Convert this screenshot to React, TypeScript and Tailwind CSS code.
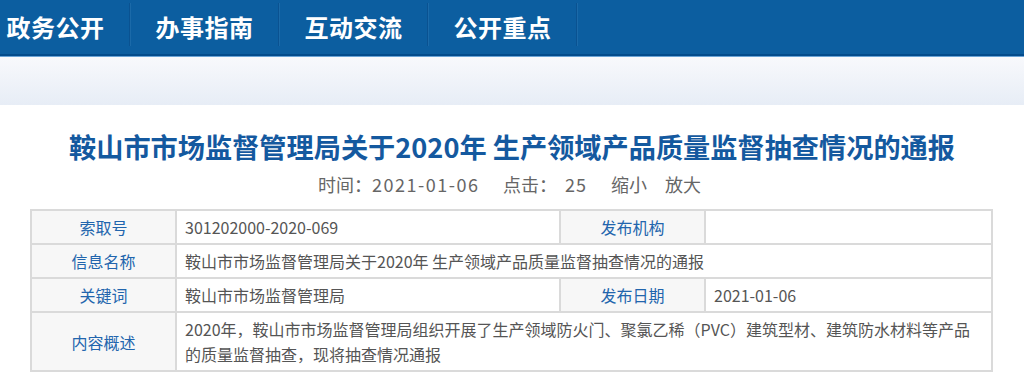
import React from 'react';

const navItems = ['政务公开', '办事指南', '互动交流', '公开重点'];

const labelCls =
  'bg-[#f7f7f7] text-[#2265ad] text-[16px] text-center border-2 border-[#dadada] font-normal';
const valueCls = 'text-[#555] text-[16px] text-left pl-[8px] border-2 border-[#dadada]';

const App: React.FC = () => {
  return (
    <div className="w-[1024px] h-[387px] overflow-hidden bg-white font-['Noto_Sans_CJK_SC','Noto_Sans',sans-serif]">
      {/* 顶部导航 */}
      <div className="h-[54px] bg-[#0c5ea0] flex items-stretch ml-[-18px]">
        {navItems.map((item) => (
          <div key={item} className="flex items-center">
            <div className="w-[147px] text-center text-white text-[24px] font-bold leading-[54px] tracking-[0.5px]">
              {item}
            </div>
            <div className="flex h-[43px] mt-[-6px]">
              <div className="w-[1px] bg-[#0a5291]" />
              <div className="w-[1px] bg-[#1b6aa9]" />
            </div>
          </div>
        ))}
      </div>
      <div className="h-[2px] bg-[#034c8c]" />
      <div className="h-[1px] bg-[#6aa3d6]" />
      <div className="h-[48px] bg-gradient-to-b from-[#f8f9fc] to-[#e7edf6]" />

      {/* 标题 */}
      <h1 className="pt-[23px] text-center text-[27.2px] leading-[36px] font-bold text-[#14599f]">
        鞍山市市场监督管理局关于2020年 生产领域产品质量监督抽查情况的通报
      </h1>
      <div className="mt-[8px] pl-[318px] flex whitespace-nowrap text-[18px] leading-[24px] text-[#666]">
        <span>时间：</span>
        <span className="w-[131px] tracking-[1.5px]">2021-01-06</span>
        <span className="w-[62px]">点击：</span>
        <span className="w-[46px] tracking-[1px]">25</span>
        <span className="w-[54px]">缩小</span>
        <span>放大</span>
      </div>

      {/* 信息表 */}
      <table className="mt-[13px] ml-[30px] w-[961px] border-collapse table-fixed">
        <colgroup>
          <col className="w-[145px]" />
          <col className="w-[384px]" />
          <col className="w-[145px]" />
          <col className="w-[287px]" />
        </colgroup>
        <tbody>
          <tr className="h-[34px]">
            <th className={labelCls}>索取号</th>
            <td className={`${valueCls} text-[14.5px]`}>301202000-2020-069</td>
            <th className={labelCls}>发布机构</th>
            <td className={valueCls}></td>
          </tr>
          <tr className="h-[34px]">
            <th className={labelCls}>信息名称</th>
            <td className={valueCls} colSpan={3}>
              鞍山市市场监督管理局关于2020年 生产领域产品质量监督抽查情况的通报
            </td>
          </tr>
          <tr className="h-[34px]">
            <th className={labelCls}>关键词</th>
            <td className={valueCls}>鞍山市市场监督管理局</td>
            <th className={labelCls}>发布日期</th>
            <td className={`${valueCls} text-[14.5px]`}>2021-01-06</td>
          </tr>
          <tr className="h-[59px]">
            <th className={labelCls}>内容概述</th>
            <td className={`${valueCls} leading-[25px]`} colSpan={3}>
              <span className="block whitespace-nowrap">
                2020年，鞍山市市场监督管理局组织开展了生产领域防火门、聚氯乙稀（PVC）建筑型材、建筑防水材料等产品
              </span>
              <span className="block">的质量监督抽查，现将抽查情况通报</span>
            </td>
          </tr>
        </tbody>
      </table>
    </div>
  );
};

export default App;
